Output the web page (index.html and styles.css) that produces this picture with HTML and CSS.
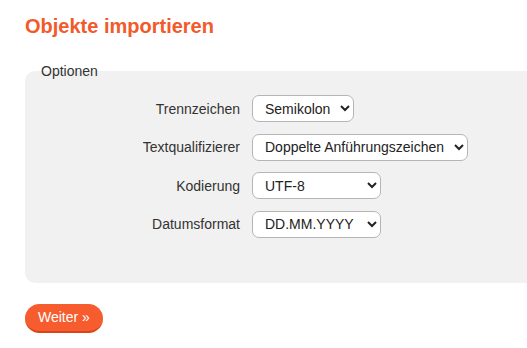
FILE: index.html
```html
<!DOCTYPE html>
<html lang="de">
<head>
<meta charset="utf-8">
<title>Objekte importieren</title>
<link rel="stylesheet" href="styles.css">
</head>
<body>
<div class="page">
  <h1 class="title">Objekte importieren</h1>
  <form class="form">
    <fieldset class="options">
      <legend class="legend">Optionen</legend>
      <div class="grid">
        <label class="label" for="sep">Trennzeichen</label>
        <select class="field" id="sep">
          <option>Semikolon</option>
          <option>Komma</option>
          <option>Tabulator</option>
        </select>
        <label class="label" for="qual">Textqualifizierer</label>
        <select class="field" id="qual">
          <option>Doppelte Anführungszeichen</option>
          <option>Einfache Anführungszeichen</option>
          <option>Keiner</option>
        </select>
        <label class="label" for="enc">Kodierung</label>
        <select class="field" id="enc">
          <option>UTF-8</option>
          <option>ISO-8859-1</option>
          <option>Windows-1252</option>
        </select>
        <label class="label" for="date">Datumsformat</label>
        <select class="field field-date" id="date">
          <option>DD.MM.YYYY</option>
          <option>YYYY-MM-DD</option>
          <option>MM/DD/YYYY</option>
        </select>
      </div>
    </fieldset>
    <button class="btn" type="button">Weiter »</button>
  </form>
</div>
</body>
</html>
```
FILE: styles.css
```css
html, body {
  margin: 0;
  padding: 0;
  background: #fff;
  overflow: hidden;
}
body {
  font-family: "Liberation Sans", Arial, sans-serif;
  color: #333;
}
.page {
  padding: 15px 0 0 25px;
}
.title {
  margin: 0 0 26px;
  font-size: 20px;
  font-weight: bold;
  color: #f25a2a;
  line-height: 23px;
}
.form {
  margin: 0;
}
.options {
  margin: 0;
  border: none;
  background: #f1f1f1;
  border-radius: 10px 0 0 10px;
  padding: 17px 0 45px 14px;
  min-width: 0;
}
.legend {
  font-size: 14px;
  color: #333;
  padding: 0 2px;
  line-height: 14px;
}
.grid {
  display: grid;
  grid-template-columns: 201px auto;
  column-gap: 12px;
  row-gap: 11.5px;
  align-items: center;
  justify-items: start;
}
.label {
  justify-self: end;
  font-size: 14px;
  color: #333;
}
.field {
  font-family: "Liberation Sans", Arial, sans-serif;
  font-size: 14px;
  color: #222;
  height: 27px;
  padding: 0 6px 0 8px;
  border: 1px solid #b5b5b5;
  border-radius: 7px;
  background-color: #fff;
}
.field-date {
  width: 129px;
}
.btn {
  margin-top: 21px;
  font-family: "Liberation Sans", Arial, sans-serif;
  font-size: 14px;
  color: #fff;
  background: #f65c2d;
  border: none;
  border-bottom: 2px solid #d8431a;
  border-radius: 15px;
  height: 29px;
  padding: 0 13px;
  line-height: 27px;
}
```
